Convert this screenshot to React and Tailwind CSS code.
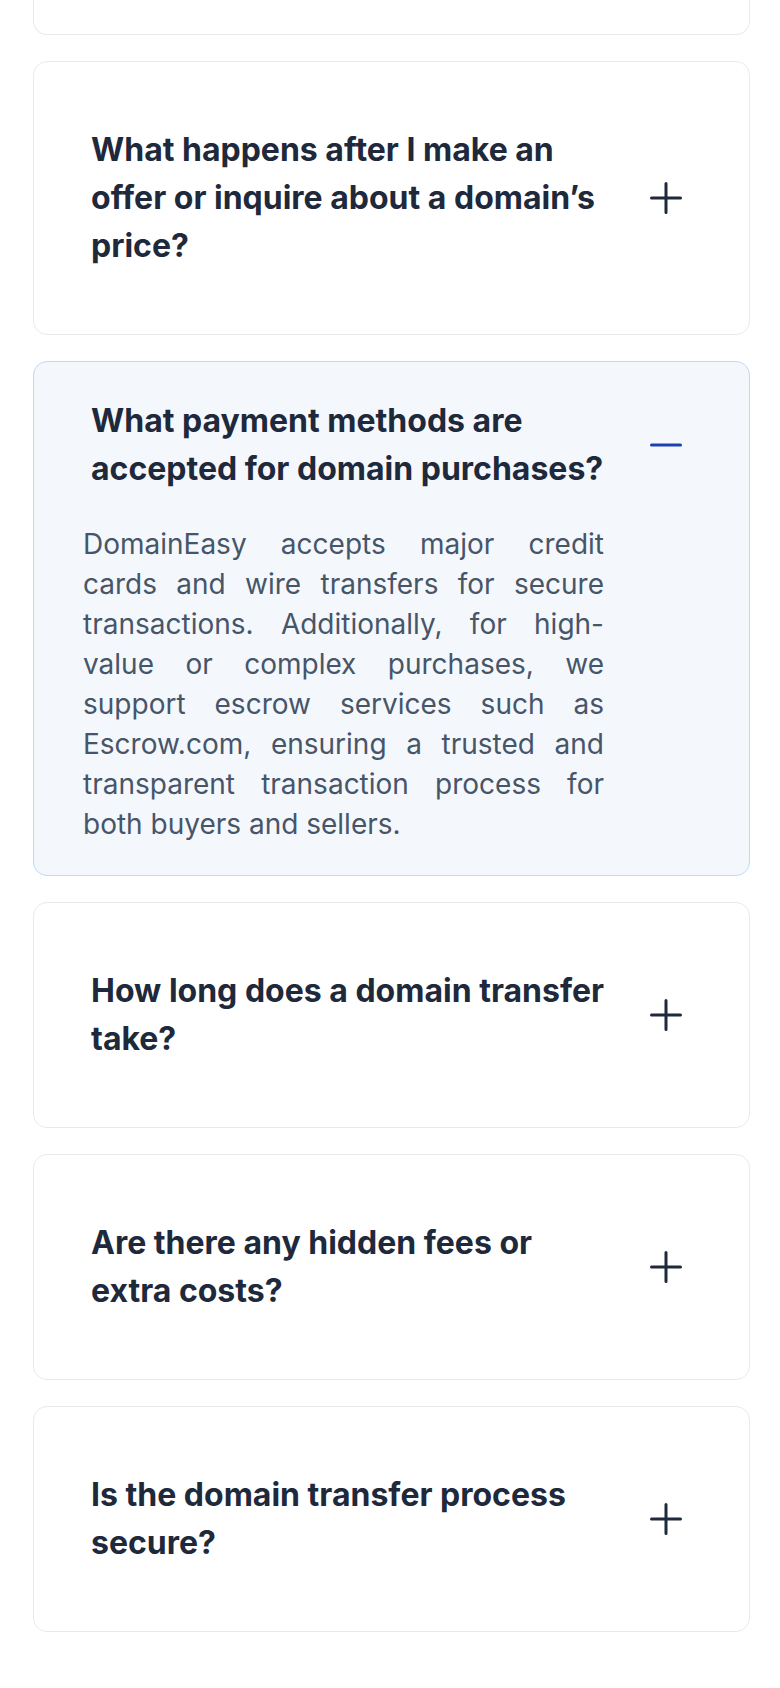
import React from "react";

const font = { fontFamily: "Inter, 'Noto Sans', sans-serif" };

function Plus() {
  return (
    <svg width="32" height="32" viewBox="0 0 32 32" className="shrink-0">
      <path d="M16 1.5V30.5M1.5 16H30.5" stroke="#1e293b" strokeWidth="3" strokeLinecap="round" />
    </svg>
  );
}

function Minus() {
  return (
    <svg width="32" height="32" viewBox="0 0 32 32" className="shrink-0">
      <path d="M1.5 16H30.5" stroke="#1e40af" strokeWidth="3" strokeLinecap="round" />
    </svg>
  );
}

function Closed({ q }) {
  return (
    <div className="rounded-[14px] border border-[#e8eaed] bg-white">
      <div className="flex items-center justify-between pl-[57px] pr-[67px] py-16">
        <h3 className="w-[516px] text-[32px] font-bold leading-[48px] text-[#1e293b]">{q}</h3>
        <Plus />
      </div>
    </div>
  );
}

export default function App() {
  return (
    <div className="min-h-[1688px] bg-white" style={font}>
      <div className="ml-[33px] flex w-[717px] flex-col gap-[26px]">
        <div className="h-[35px] rounded-b-[14px] border border-t-0 border-[#e8eaed] bg-white" />
        <Closed q="What happens after I make an offer or inquire about a domain’s price?" />
        <div className="rounded-[14px] border border-[#bcdcf5] bg-[#f4f8fd] pt-[35px] pb-[31px]">
          <div className="flex items-center justify-between pl-[57px] pr-[67px]">
            <h3 className="w-[516px] text-[32px] font-bold leading-[48px] text-[#1e293b]">
              What payment methods are accepted for domain purchases?
            </h3>
            <Minus />
          </div>
          <p className="mt-[31px] ml-[49px] w-[521px] text-justify text-[28px] leading-[40px] text-[#475569]">
            DomainEasy accepts major credit cards and wire transfers for secure transactions. Additionally, for high-value or complex purchases, we support escrow services such as Escrow.com, ensuring a trusted and transparent transaction process for both buyers and sellers.
          </p>
        </div>
        <Closed q="How long does a domain transfer take?" />
        <Closed q="Are there any hidden fees or extra costs?" />
        <Closed q="Is the domain transfer process secure?" />
      </div>
    </div>
  );
}
